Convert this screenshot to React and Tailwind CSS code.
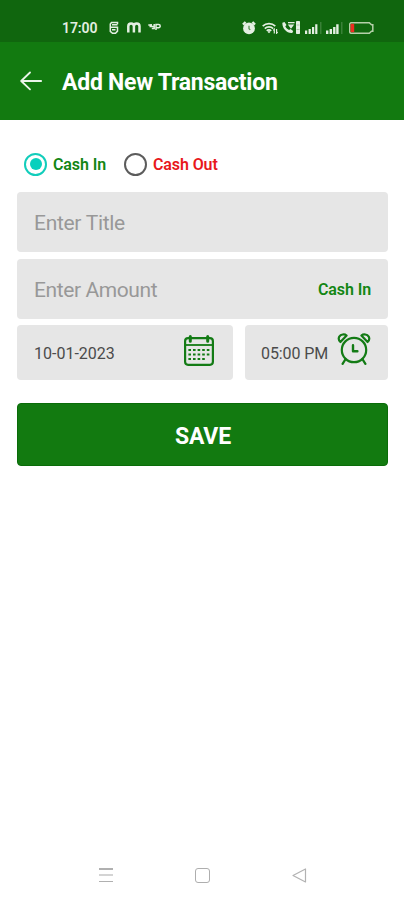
import React from "react";

function StatusBar() {
  return (
    <div className="flex h-[42px] shrink-0 items-start bg-[#10660e] pt-[20px] text-[#e4efe2]">
      <span className="ml-[62px] w-[36px] whitespace-nowrap text-[14px] font-semibold leading-[16px] tracking-[-0.1px]">17:00</span>
      <svg className="ml-[11px] mt-px h-[14px] w-[10px]" viewBox="0 0 10 14" fill="none" stroke="currentColor" strokeWidth="1.5">
        <path d="M8.5 3.2V1.5h-6L1.3 3v3.2h7.2v3.9L6.5 12.3h-3L1.3 10.3V8.8M3 3.8h5.5M3 8.8h3.5M1.3 6v4" />
      </svg>
      <svg className="ml-[8px] mt-[2px] h-[11px] w-[14px]" viewBox="0 0 14 11" fill="none" stroke="currentColor" strokeWidth="2.5">
        <path d="M1.3 10.5V4.2a2.8 2.8 0 0 1 5.6 0v6.3M6.9 4.2a2.8 2.8 0 0 1 5.6 0v6.3" />
      </svg>
      <svg className="ml-[7px] mt-[2px] h-[9px] w-[13px]" viewBox="0 0 13 9" fill="none" stroke="currentColor" strokeWidth="1.5">
        <path d="M.3 3h2.5M1.5 4.5h2M3.2 2v2.5h3V2M6.2 4v2.5H3.8M8 8V2.5h2.6a1.6 1.6 0 0 1 0 3.2H8" />
      </svg>
      <svg className="ml-[81px] mt-px h-[14px] w-[14px]" viewBox="0 0 14 14">
        <path d="M1 3.6 3.6 1M13 3.6 10.4 1" stroke="currentColor" strokeWidth="2.4" />
        <circle cx="7" cy="7.4" r="5.9" fill="currentColor" />
        <path d="M7 4.8v3l1.3 1.1" fill="none" stroke="#4b8949" strokeWidth="1.2" />
      </svg>
      <svg className="ml-[6px] mt-[2px] h-[12px] w-[16px]" viewBox="0 0 16 12" fill="none" stroke="currentColor" strokeWidth="1.7">
        <path d="M.7 4.2a9.2 9.2 0 0 1 12.6 0M2.8 6.6a6 6 0 0 1 8.4 0M4.8 8.8a3 3 0 0 1 4.4 0" />
        <path d="M7 8.5 8.3 10 7 11.2 5.7 10z" fill="currentColor" stroke="none" />
        <path d="M12.3 11.5V7.3l-1 1.2M14.6 7v4.2l1-1.2" strokeWidth="1.2" />
      </svg>
      <svg className="ml-[4px] mt-px h-[13px] w-[18px]" viewBox="0 0 18 13" fill="currentColor">
        <path d="M.4 1.8 2.5.9l2 3-1.2 1.4c.8 1.8 2 3 3.8 3.8l1.4-1.2 2.7 2-.9 2.1C5 12.8-.1 7.4.4 1.8Z" />
        <path d="M6 1.6h6.6M7 4.2h4L9 6.8z" stroke="currentColor" strokeWidth="1.2" />
        <rect x="14" y="0" width="4" height="13" rx=".7" />
        <path d="M14.5 4h3M14.5 8.5h3" stroke="#6f9e6c" strokeWidth=".5" />
      </svg>
      <svg className="ml-[5px] mt-[2px] h-[12px] w-[17px]" viewBox="0 0 17 12" fill="currentColor">
        <path d="M0 8.5h2.2V12H0zM3.6 7h2.2v5H3.6zM7 5h2.2v7H7zM10.2 2.2h2.2V12h-2.2z" />
        <path d="M15 0h1.5v12H15z" opacity=".2" />
      </svg>
      <svg className="ml-[4px] mt-[2px] h-[12px] w-[18px]" viewBox="0 0 18 12" fill="currentColor">
        <path d="M0 8.5h2.4V12H0zM3.6 7H6v5H3.6zM7.1 5h2.4v7H7.1zM10.2 2.2h2.4V12h-2.4z" />
        <path d="M15 0h1.5v12H15z" opacity=".2" />
      </svg>
      <svg className="ml-[5px] mt-[2px] h-[12px] w-[25px]" viewBox="0 0 25 12" fill="none">
        <path d="M2.5.7h17.8l2.2 2h1.3v6.6h-1.3l-2.2 2H2.5A1.8 1.8 0 0 1 .7 9.5v-7A1.8 1.8 0 0 1 2.5.7Z" stroke="#b5d0a9" strokeWidth="1.5" />
        <path d="M1.6 1.8h3.6v8.4H1.6z" fill="#ee2c20" />
      </svg>
    </div>
  );
}

function Header() {
  return (
    <header className="flex h-[78px] shrink-0 items-center bg-[#127a10]">
      <svg className="ml-[20px] h-[20px] w-[22px] text-[#eaf5e9]" viewBox="0 0 22 20" fill="none" stroke="currentColor" strokeWidth="1.8" strokeLinecap="round" strokeLinejoin="round">
        <path d="M10 1.5 1.2 10l8.8 8.3M1.5 10h19.7" />
      </svg>
      <h1 className="ml-[20px] whitespace-nowrap pt-[3px] text-[23px] font-bold leading-[28px] tracking-[-0.25px] text-white">Add New Transaction</h1>
    </header>
  );
}

function CalendarIcon() {
  return (
    <svg className="h-[31px] w-[30px] text-[#137b15]" viewBox="0 0 30 31" fill="none" stroke="currentColor">
      <rect x="1.1" y="3.2" width="27.8" height="26.6" rx="3" strokeWidth="2.2" />
      <path d="M1 10h28" strokeWidth="1.8" />
      <path d="M6.3 1.5v4.8M23.7 1.5v4.8" strokeWidth="3" strokeLinecap="round" />
      <path d="M4.4 15H26M4.4 19.5H26M4.4 24h17" strokeWidth="2.2" strokeDasharray="2.6 2" />
    </svg>
  );
}

function ClockIcon() {
  return (
    <svg className="h-[33px] w-[34px] text-[#137b15]" viewBox="0 0 34 33" fill="none" stroke="currentColor" strokeWidth="2.2" strokeLinecap="round" strokeLinejoin="round">
      <circle cx="17" cy="17" r="12.2" />
      <path d="M3.4 9A4.5 4.5 0 0 1 2.3 3.6C3.8 1.2 7.5.7 9.6 2.5ZM30.6 9a4.5 4.5 0 0 0 1.1-5.4c-1.5-2.4-5.2-2.9-7.3-1.1ZM8.4 26.3l-2.8 4.5M25.6 26.3l2.8 4.5" />
      <path d="M16 12.3v5.9h4.4" strokeWidth="2.4" />
    </svg>
  );
}

function TypePicker() {
  return (
    <div className="flex h-[24px] items-center text-[16px] font-semibold leading-[20px]">
      <span className="ml-[7px] flex size-[23px] items-center justify-center rounded-full border-2 border-[#12cdbb]">
        <span className="size-[12px] rounded-full bg-[#08d0bd]" />
      </span>
      <span className="ml-[6px] w-[53px] whitespace-nowrap pt-[2px] tracking-[-0.1px] text-[#138614]">Cash In</span>
      <span className="ml-[18px] size-[23px] rounded-full border-2 border-[#5c5c5c]" />
      <span className="ml-[6px] whitespace-nowrap pt-[2px] tracking-[-0.1px] text-[#e8181c]">Cash Out</span>
    </div>
  );
}

export default function App() {
  return (
    <div className="flex h-[900px] w-[404px] flex-col overflow-hidden bg-white font-['Roboto','Liberation_Sans',sans-serif]">
      <StatusBar />
      <Header />
      <main className="flex flex-1 flex-col px-[17px] pt-[32px]">
        <TypePicker />
        <div className="mt-[16px] flex h-[60px] w-[371px] items-center rounded-[4px] bg-[#e6e6e6] pl-[17px] pt-[3px] text-[21px] tracking-[-0.3px] text-[#989898]">
          <span>Enter Title</span>
        </div>
        <div className="mt-[7px] flex h-[60px] w-[371px] items-center justify-between rounded-[4px] bg-[#e6e6e6] px-[17px]">
          <span className="pt-[3px] text-[21px] tracking-[-0.4px] text-[#989898]">Enter Amount</span>
          <span className="pt-[2px] text-[16px] font-semibold tracking-[-0.1px] text-[#138614]">Cash In</span>
        </div>
        <div className="mt-[6px] flex h-[55px] w-[371px] gap-[12px] text-[16px] text-[#4b4b4b]">
          <div className="flex w-[216px] items-center justify-between rounded-[4px] bg-[#e6e6e6] pl-[17px] pr-[19px]">
            <span className="pt-[2px]">10-01-2023</span>
            <div className="mb-[5px]"><CalendarIcon /></div>
          </div>
          <div className="flex w-[143px] items-center justify-between rounded-[4px] bg-[#e6e6e6] pl-[16px] pr-[17px]">
            <span className="whitespace-nowrap pt-[2px] tracking-[-0.1px]">05:00 PM</span>
            <div className="mb-[6px] shrink-0"><ClockIcon /></div>
          </div>
        </div>
        <button className="mt-[23px] h-[63px] w-[371px] rounded-[4px] border border-[#0a6c09] bg-[#127a10] pl-px pt-[4px] text-[23px] font-bold leading-[28px] tracking-[-0.2px] text-white">SAVE</button>
      </main>
      <nav className="flex h-[50px] shrink-0 items-center">
        <span className="ml-[99px] flex h-[14px] w-[14px] flex-col justify-between">
          <span className="h-[1.5px] bg-[#b0b0b0]" />
          <span className="h-[2px] bg-[#d4d4d4]" />
          <span className="h-[1.5px] bg-[#b0b0b0]" />
        </span>
        <span className="ml-[82px] size-[15px] rounded-[3px] border-[1.5px] border-[#aeaeae]" />
        <svg className="ml-[82px] h-[15px] w-[15px]" viewBox="0 0 15 15" fill="none" stroke="#b2b2b2" strokeWidth="1.2" strokeLinejoin="round">
          <path d="M1 7.5 13.5 1v13z" />
        </svg>
      </nav>
    </div>
  );
}
